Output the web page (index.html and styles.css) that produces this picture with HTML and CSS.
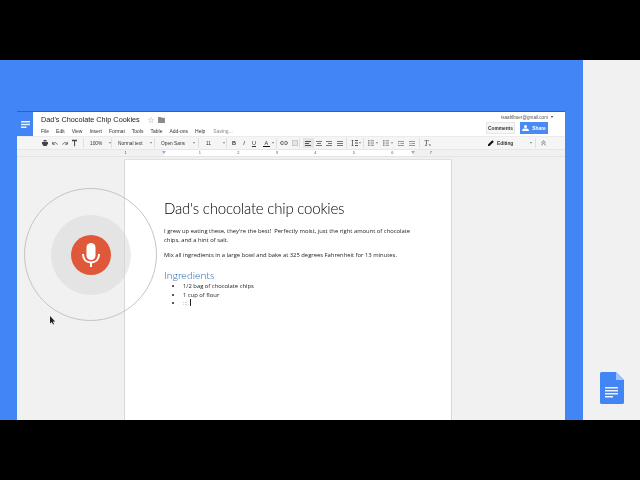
FILE: index.html
```html
<!DOCTYPE html>
<html lang="en">
<head>
<meta charset="utf-8">
<title>Dad's Chocolate Chip Cookies</title>
<link rel="stylesheet" href="styles.css">
</head>
<body>
<main class="stage">
  <section class="desk">
    <div class="window">
      <header class="head">
        <div class="logo"><svg width="9" height="7" viewBox="0 0 9 7"><path d="M0 0h9v1.500H0zM0 2.700h9v1.500H0zM0 5.400h5.500v1.500H0z" fill="#e8f0fe"/></svg></div>
        <div class="titles">
          <div class="title-row"><span class="doc-name">Dad's Chocolate Chip Cookies</span>
            <svg class="star" width="6" height="6" viewBox="0 0 24 24"><path d="M12 2l3 7 7 .6-5.400 4.700L18.300 22 12 18l-6.300 4 1.700-7.700L2 9.600 9 9z" fill="none" stroke="#c4c4c4" stroke-width="2.500"/></svg>
            <svg class="folder" width="7" height="6" viewBox="0 0 8 7"><path d="M0 0h3l1 1h4v6H0z" fill="#8a8a8a"/></svg>
          </div>
          <nav class="menu"><span>File</span><span>Edit</span><span>View</span><span>Insert</span><span>Format</span><span>Tools</span><span>Table</span><span>Add-ons</span><span>Help</span><span class="saving">Saving...</span></nav>
        </div>
        <div class="account">
          <div class="email">isaahlbuer@gmail.com <i class="caret dark"></i></div>
          <div class="actions"><button class="comments">Comments</button><button class="share"><svg width="7" height="6" viewBox="0 0 7 6"><circle cx="3.500" cy="1.500" r="1.500" fill="#fff"/><path d="M0 6c0-2 1.500-2.500 3.500-2.500S7 4 7 6z" fill="#fff"/></svg>Share</button></div>
        </div>
      </header>
      <div class="toolbar">
        <div class="group g-hist">
          <svg width="6" height="6" viewBox="0 0 8 8"><path d="M2 0h4v2H2zM0 2.500h8V6H6.500v2h-5V6H0z" fill="#444"/></svg>
          <svg width="6" height="5" viewBox="0 0 8 6"><path d="M1 3.500C2.500 1 5.500 1 7.200 4.500M.8 1v3h3" fill="none" stroke="#444" stroke-width="1"/></svg>
          <svg width="6" height="5" viewBox="0 0 8 6"><path d="M7 3.500C5.500 1 2.500 1 .8 4.500M7.200 1v3h-3" fill="none" stroke="#444" stroke-width="1"/></svg>
          <svg width="5" height="8" viewBox="0 0 6 8"><path d="M0 0h6v2H0zM2.500 2h1.200v6H2.500z" fill="#444"/></svg>
        </div>
        <div class="group g-zoom"><span>100%</span><i class="caret"></i></div>
        <div class="group g-style"><span>Normal text</span><i class="caret"></i></div>
        <div class="group g-font"><span>Open Sans</span><i class="caret"></i></div>
        <div class="group g-size"><span>11</span><i class="caret"></i></div>
        <div class="group g-fmt">
          <b>B</b><em>I</em><u>U</u><span class="color-a">A</span><i class="caret"></i>
        </div>
        <div class="group g-ins">
          <svg width="8" height="4" viewBox="0 0 8 4"><path d="M3.300.5H2a1.500 1.500 0 000 3h1.300M4.700.5H6a1.500 1.500 0 010 3H4.700M2.500 2h3" fill="none" stroke="#555" stroke-width=".8"/></svg>
          <svg width="6" height="6" viewBox="0 0 6 6"><path d="M0 0h6v6H0z" fill="#e4e4e4" stroke="#b5b5b5"/></svg>
        </div>
        <div class="group g-align">
          <span class="al on"><svg width="6" height="5" viewBox="0 0 6 5"><path d="M0 0h6v1H0zM0 2h4v1H0zM0 4h6v1H0z" fill="#555"/></svg></span>
          <span class="al"><svg width="6" height="5" viewBox="0 0 6 5"><path d="M0 0h6v1H0zM1 2h4v1H1zM0 4h6v1H0z" fill="#777"/></svg></span>
          <span class="al"><svg width="6" height="5" viewBox="0 0 6 5"><path d="M0 0h6v1H0zM2 2h4v1H2zM0 4h6v1H0z" fill="#777"/></svg></span>
          <span class="al"><svg width="6" height="5" viewBox="0 0 6 5"><path d="M0 0h6v1H0zM0 2h6v1H0zM0 4h6v1H0z" fill="#777"/></svg></span>
        </div>
        <div class="group g-space"><svg width="7" height="6" viewBox="0 0 7 6"><path d="M0 1l1.500-1L3 1zM0 5l1.500 1L3 5zM4 0h3v1H4zM4 2.500h3v1H4zM4 5h3v1H4z" fill="#555"/><path d="M1.500 0v6" stroke="#555" stroke-width=".8"/></svg><i class="caret"></i></div>
        <div class="group g-list">
          <svg class="li" width="6" height="6" viewBox="0 0 6 6"><path d="M0 0h1.500v1.500H0zM0 2.200h1.500v1.500H0zM0 4.500h1.500V6H0zM2.500 .3H6v1H2.500zM2.500 2.500H6v1H2.500zM2.500 4.700H6v1H2.500z" fill="#888"/></svg><i class="caret after"></i>
          <svg class="li" width="6" height="6" viewBox="0 0 6 6"><path d="M0 0h1.500v1.500H0zM0 2.200h1.500v1.500H0zM0 4.500h1.500V6H0zM2.500 .3H6v1H2.500zM2.500 2.500H6v1H2.500zM2.500 4.700H6v1H2.500z" fill="#888"/></svg><i class="caret after"></i>
          <svg class="ind" width="6" height="5" viewBox="0 0 6 5"><path d="M0 0h6v1H0zM2.500 2h3.500v1H2.500zM0 4h6v1H0zM0 1.500L1.500 2.500 0 3.500z" fill="#999"/></svg>
          <svg class="ind" width="6" height="5" viewBox="0 0 6 5"><path d="M0 0h6v1H0zM2.500 2h3.500v1H2.500zM0 4h6v1H0zM1.500 1.500L0 2.500l1.500 1z" fill="#999"/></svg>
        </div>
        <div class="group g-clear"><em class="tx">T<small>x</small></em></div>
        <div class="mode"><svg width="6" height="6" viewBox="0 0 6 6"><path d="M0 6V4.500L4.300.2l1.500 1.500L1.500 6z" fill="#111"/></svg><span>Editing</span><i class="caret"></i></div>
        <div class="collapse"><svg width="5" height="6" viewBox="0 0 6 6"><path d="M.5 2.800L3 .5l2.500 2.300M.5 5.500L3 3.200l2.500 2.300" fill="none" stroke="#555"/></svg></div>
      </div>
      <div class="ruler">
        <div class="ruler-track">
          <span class="margin-l"><i>1</i></span>
          <span class="tick"><i>1</i></span><span class="tick"><i>2</i></span><span class="tick"><i>3</i></span><span class="tick"><i>4</i></span><span class="tick"><i>5</i></span><span class="tick"><i>6</i></span><span class="tick"><i>7</i></span>
          <span class="marker left"></span><span class="marker right"></span>
        </div>
      </div>
      <div class="canvas">
        <article class="page">
          <h1>Dad's chocolate chip cookies</h1>
          <p>I grew up eating these, they're the best!&nbsp; Perfectly moist, just the right amount of chocolate chips, and a hint of salt.</p>
          <p>Mix all ingredients in a large bowl and bake at 325 degrees Fahrenheit for 13 minutes.</p>
          <h2>Ingredients</h2>
          <ul>
            <li>1/2 bag of chocolate chips</li>
            <li>1 cup of flour</li>
            <li><span class="pending">:::.</span><span class="cursor"></span></li>
          </ul>
        </article>
      </div>
    </div>
  </section>
  <aside class="side">
    <svg width="24" height="32" viewBox="0 0 24 32"><path d="M1.500 0H16l8 8v22.500a1.500 1.500 0 01-1.500 1.500h-21A1.500 1.500 0 010 30.500v-29A1.500 1.500 0 011.500 0z" fill="#4285f4"/><path d="M16 0l8 8h-8z" fill="#a1c2fa"/><path d="M5 15h13v1.500H5zM5 18h13v1.500H5zM5 21h13v1.500H5zM5 24h8v1.500H5z" fill="#f1f1f1"/></svg>
  </aside>
  <div class="voice">
    <div class="halo"><div class="mic"><svg width="18" height="24" viewBox="0 0 18 24"><rect x="4.500" y="0" width="9" height="17" rx="4.500" fill="#fff"/><path d="M1 11c0 5.500 3.500 8.500 8 8.500s8-3 8-8.500" fill="none" stroke="#fff" stroke-width="2"/><path d="M8 19h2v5H8z" fill="#fff"/></svg></div></div>
  </div>
  <svg class="pointer" width="6" height="9" viewBox="0 0 6 9"><path d="M0 0v7.500l1.800-1.600L3 8.500l1-.5-1.200-2.500H5.200z" fill="#222"/></svg>
</main>
</body>
</html>
```
FILE: styles.css
```css
* { box-sizing: border-box; }
html, body { margin: 0; height: 480px; overflow: hidden; background: #000; }
body { padding-top: 60px; }
.stage { position: relative; display: flex; width: 640px; height: 360px; font-family: "Open Sans", sans-serif; color: #333; }
.desk { width: 583px; background: #4285f4; padding: 51px 18px 0 17px; }
.side { flex: 1; background: #f1f1f1; display: flex; justify-content: flex-end; align-items: flex-end; padding: 0 16px 16px 0; }
.window { height: 309px; display: flex; flex-direction: column; background: #f1f1f1; border-top: 1px solid #2f62b8; filter: blur(.35px); }
.head { height: 24px; flex: none; display: flex; background: #fff; }
.logo { width: 16px; height: 24px; background: #4285f4; display: flex; align-items: center; justify-content: center; }
.titles { padding: 1px 0 0 8px; flex: 1; }
.title-row { display: flex; align-items: center; height: 13px; }
.doc-name { font: 7.300px "Liberation Sans", sans-serif; color: #222; width: 107px; white-space: nowrap; }
.folder { margin-left: 4px; }
.menu { display: flex; font: 5px "Liberation Sans", sans-serif; color: #333; height: 9px; align-items: center; }
.menu span { margin-right: 7px; white-space: nowrap; }
.menu .saving { color: #888; margin-left: 1px; }
.account { width: 79px; padding-top: 2px; display: flex; flex-direction: column; align-items: flex-end; }
.email { font: 4.600px "Liberation Sans", sans-serif; color: #555; white-space: nowrap; margin-right: 12px; display: flex; align-items: center; gap: 3px; height: 6px; }
.actions { display: flex; gap: 5px; margin-top: 2px; margin-right: 17px; }
.actions button { border: 0; padding: 0; height: 12px; font: bold 4.800px "Liberation Sans", sans-serif; display: flex; align-items: center; justify-content: center; }
.actions .comments { width: 29px; background: #f7f7f7; border: 1px solid #e6e6e6; color: #333; }
.share { width: 28px; background: #4a8af4; color: #fff; gap: 3px; }
.caret { display: inline-block; width: 0; height: 0; border: 1.500px solid transparent; border-top: 2px solid #888; border-bottom: 0; flex: none; }
.caret.dark { border-top-color: #333; }
.toolbar { height: 14px; flex: none; display: flex; align-items: stretch; background: #f5f5f5; border-top: 1px solid #ececec; border-bottom: 1px solid #e6e6e6; font: 4.800px "Liberation Sans", sans-serif; color: #333; }
.group { display: flex; flex: none; align-items: center; border-right: 1px solid #e0e0e0; margin: 1px 0; white-space: nowrap; }
.group svg, .mode svg, .collapse svg { flex: none; }
.g-hist { width: 67px; padding-left: 25px; gap: 4px; }
.g-zoom { width: 28px; padding-left: 6px; gap: 7px; }
.g-style { width: 43px; padding-left: 6px; gap: 7px; }
.g-font { width: 44px; padding-left: 6px; gap: 8px; }
.g-size { width: 28px; padding-left: 7px; gap: 12px; }
.g-fmt { width: 50px; padding-left: 5px; gap: 6px; font-size: 5.500px; }
.g-fmt b, .g-fmt em, .g-fmt u { width: 4px; text-align: center; }
.color-a { border-bottom: 1px solid #111; line-height: 6px; padding: 0 1.500px; margin-left: 1px; margin-right: -4px; }
.g-ins { width: 23px; padding-left: 3px; gap: 4px; }
.g-align { width: 47px; padding-left: 3px; }
.al { width: 10.500px; height: 10px; display: flex; align-items: center; justify-content: center; }
.al.on { background: #e4e4e4; }
.g-space { width: 17px; padding-left: 4px; gap: 1px; }
.g-list { width: 56px; padding-left: 4px; gap: 2px; }
.g-list .after { margin-right: 3px; }
.g-list .ind { margin-right: 3px; }
.g-clear { width: 30px; padding-left: 4px; border: 0; }
.tx { font: italic 8px "Liberation Serif", serif; color: #444; }
.tx small { font-size: 5px; font-style: normal; }
.mode { display: flex; flex: none; align-items: center; width: 86px; padding-left: 38px; gap: 3px; border-right: 1px solid #e0e0e0; margin: 1px 0; font-weight: bold; font-size: 4.800px; }
.mode .caret { margin-left: 14px; }
.collapse { display: flex; align-items: center; padding-left: 5px; }
.ruler { height: 7px; flex: none; background: #f1f1f1; border-bottom: 1px solid #e4e4e4; }
.ruler-track { position: relative; display: flex; margin-left: 107.500px; width: 326px; height: 6px; font: 4px/6px "Liberation Sans", sans-serif; color: #555; background: linear-gradient(#fff, #fff) 39px 0 / 249px 100% no-repeat; }
.margin-l { width: 39px; flex: none; }
.margin-l i, .tick i { font-style: normal; }
.tick { width: 38.500px; flex: none; text-align: right; padding-right: 1px; }
.marker { position: absolute; top: 1px; width: 0; height: 0; border: 2px solid transparent; border-top: 3px solid #8ab0ee; border-bottom: 0; }
.marker.left { left: 37px; }
.marker.right { left: 286px; border-top-color: #aaa; }
.canvas { flex: 1; display: flex; padding: 2px 0 0 107px; min-height: 0; overflow: hidden; }
.page { width: 328px; background: #fff; border-left: 1px solid #d8d8d8; border-right: 1px solid #d8d8d8; border-top: 1px solid #e0e0e0; padding: 38px 35px 0 39px; font-size: 5.850px; line-height: 9px; color: #222; }
h1 { font: 300 15px/20px Lato, sans-serif; color: #000; margin: 0 0 8.500px; white-space: nowrap; letter-spacing: -.2px; }
p { margin: 0 0 6px; }
h2 { font: 300 10.600px/14px Lato, sans-serif; color: #1f66ad; margin: 8.500px 0 0; }
ul { margin: 0; padding: 0 0 0 19px; line-height: 8.500px; }
.pending { color: #999; }
.cursor { display: inline-block; width: 1px; height: 7px; background: #222; vertical-align: -1px; margin-left: 1px; }
.voice { position: absolute; left: 24px; top: 128px; width: 133px; height: 133px; border-radius: 50%; border: 1px solid #c4c4c4; display: flex; align-items: center; justify-content: center; }
.halo { width: 80px; height: 80px; border-radius: 50%; background: rgba(215,215,215,.5); display: flex; align-items: center; justify-content: center; }
.mic { width: 40px; height: 40px; border-radius: 50%; background: #e0583a; display: flex; align-items: center; justify-content: center; }
.pointer { position: absolute; left: 50px; top: 256px; }
```
